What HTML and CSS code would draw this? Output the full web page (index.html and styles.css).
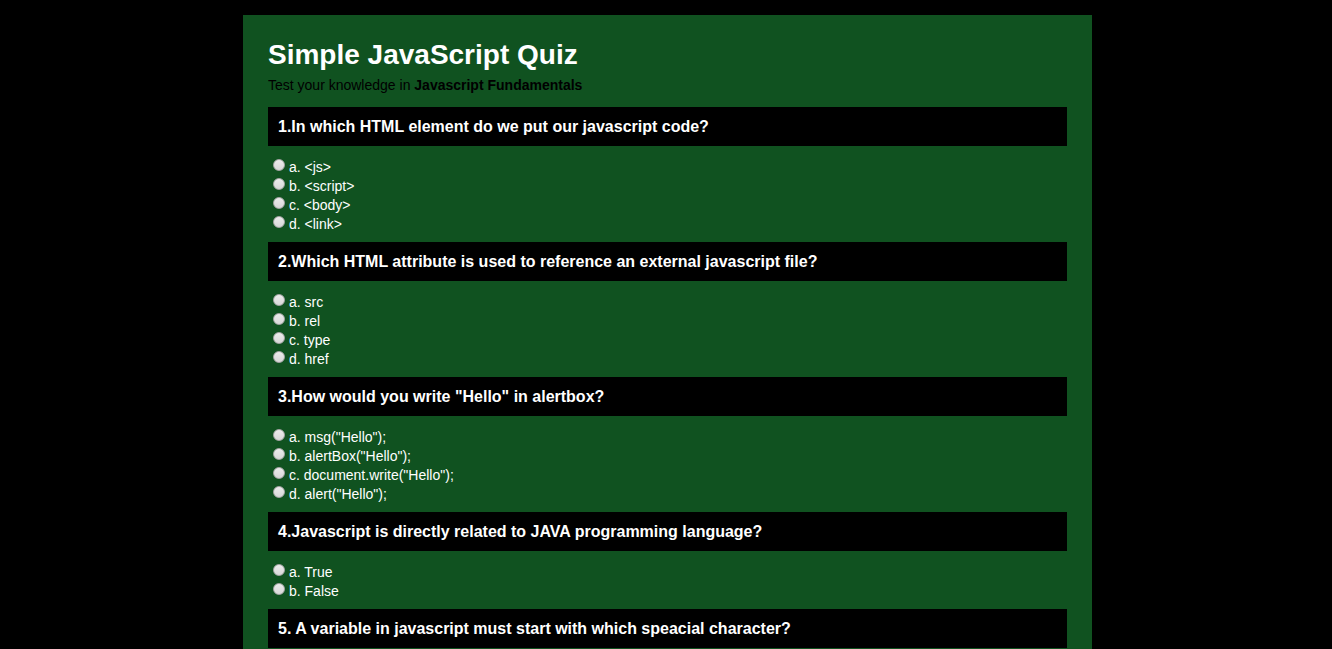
FILE: index.html
```html
<!DOCTYPE html>
<html lang="en">
<head>
<meta charset="utf-8">
<title>Simple JavaScript Quiz</title>
<link rel="stylesheet" href="styles.css">
</head>
<body>
<main class="container">
  <header class="intro">
    <h1>Simple JavaScript Quiz</h1>
    <p>Test your knowledge in <strong>Javascript Fundamentals</strong></p>
  </header>
  <form class="quiz">
    <section>
      <h3>1.In which HTML element do we put our javascript code?</h3>
      <div class="options">
        <label><input type="radio" name="q1" value="a"><span>a. &lt;js&gt;</span></label>
        <label><input type="radio" name="q1" value="b"><span>b. &lt;script&gt;</span></label>
        <label><input type="radio" name="q1" value="c"><span>c. &lt;body&gt;</span></label>
        <label><input type="radio" name="q1" value="d"><span>d. &lt;link&gt;</span></label>
      </div>
    </section>
    <section>
      <h3>2.Which HTML attribute is used to reference an external javascript file?</h3>
      <div class="options">
        <label><input type="radio" name="q2" value="a"><span>a. src</span></label>
        <label><input type="radio" name="q2" value="b"><span>b. rel</span></label>
        <label><input type="radio" name="q2" value="c"><span>c. type</span></label>
        <label><input type="radio" name="q2" value="d"><span>d. href</span></label>
      </div>
    </section>
    <section>
      <h3>3.How would you write "Hello" in alertbox?</h3>
      <div class="options">
        <label><input type="radio" name="q3" value="a"><span>a. msg("Hello");</span></label>
        <label><input type="radio" name="q3" value="b"><span>b. alertBox("Hello");</span></label>
        <label><input type="radio" name="q3" value="c"><span>c. document.write("Hello");</span></label>
        <label><input type="radio" name="q3" value="d"><span>d. alert("Hello");</span></label>
      </div>
    </section>
    <section>
      <h3>4.Javascript is directly related to JAVA programming language?</h3>
      <div class="options">
        <label><input type="radio" name="q4" value="a"><span>a. True</span></label>
        <label><input type="radio" name="q4" value="b"><span>b. False</span></label>
      </div>
    </section>
    <section>
      <h3>5. A variable in javascript must start with which speacial character?</h3>
    </section>
  </form>
</main>
</body>
</html>
```
FILE: styles.css
```css
* { box-sizing: border-box; }

html {
  background: #000;
  scrollbar-width: none;
}

body {
  margin: 0;
  padding: 15px 0 0 3px;
  background: #000;
  color: #fff;
  font-family: "Liberation Sans", Arial, sans-serif;
  font-size: 14px;
  line-height: 19px;
}

.container {
  max-width: 849px;
  margin: 0 auto;
  padding: 20px 25px 1px;
  background: #105220;
}

.intro h1 {
  margin: 0;
  font-size: 28px;
  line-height: 40px;
}

.intro p {
  margin: 0 0 12px;
  color: #000;
  line-height: 20px;
}

.quiz h3 {
  margin: 0;
  padding: 10px;
  background: #000;
  font-size: 16px;
  line-height: 19px;
}

.options {
  padding: 12px 5px 8px;
}

.options label {
  display: flex;
  align-items: flex-start;
  gap: 4px;
}

.options input {
  appearance: none;
  flex: none;
  width: 12px;
  height: 12px;
  margin: 1px 0 0;
  border: 1px solid #a6a6a6;
  border-radius: 50%;
  background: linear-gradient(#ececec, #d8d8d8);
}

.options input:checked {
  box-shadow: inset 0 0 0 2px #ddd;
  background: #333;
}
```
